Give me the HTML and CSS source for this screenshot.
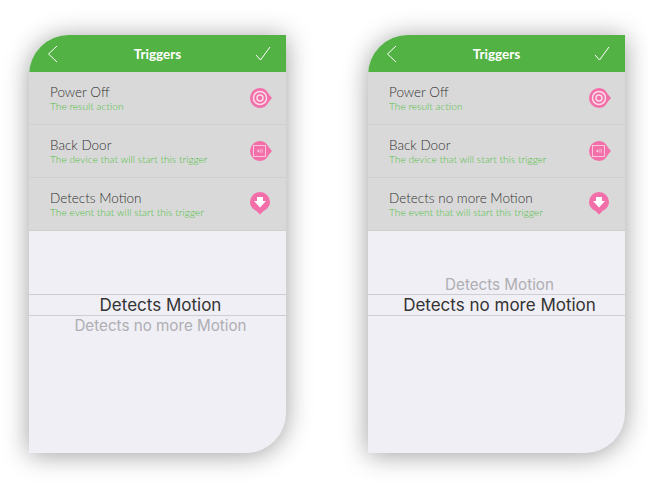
FILE: index.html
```html
<!DOCTYPE html>
<html lang="en">
<head>
    <meta charset="UTF-8">
    <title>Triggers</title>
    <link rel="stylesheet" href="styles.css">
</head>
<body>
    <svg class="defs" width="0" height="0">
        <symbol id="pin-target" viewBox="0 0 26 24">
            <path d="M12 2a10 10 0 1 0 0 20c4 0 7.200-2.800 9-6.500l3-3.500-3-3.500C19.200 4.800 16 2 12 2z" fill="#f36fa9"/>
            <circle cx="12" cy="12" r="6.500" fill="none" stroke="#fbdce9" stroke-width="1.500"/>
            <circle cx="12" cy="12" r="3" fill="none" stroke="#fbdce9" stroke-width="1.500"/>
        </symbol>
        <symbol id="pin-door" viewBox="0 0 26 24">
            <path d="M12 2a10 10 0 1 0 0 20c4 0 7.200-2.800 9-6.500l3-3.500-3-3.500C19.200 4.800 16 2 12 2z" fill="#f36fa9"/>
            <rect x="5.500" y="6.500" width="12" height="11" fill="none" stroke="#fbdce9" stroke-width=".8"/>
            <path d="M9.500 11.200h.8l1-1v3.600l-1-1h-.8z" fill="#fbdce9"/>
            <path d="M12.500 10.500c.5 1 .5 2 0 3M13.800 9.800c.8 1.400.8 3 0 4.400" fill="none" stroke="#fbdce9" stroke-width=".6"/>
        </symbol>
        <symbol id="pin-down" viewBox="0 0 24 26">
            <path d="M12 2a10 10 0 0 0-10 10c0 4 2.800 7.200 6.500 9l3.500 3.500 3.500-3.500c3.700-1.800 6.500-5 6.500-9a10 10 0 0 0-10-10z" fill="#f36fa9"/>
            <path d="M9 7h6v4h3l-6 6.500L6 11h3z" fill="#fff"/>
        </symbol>
    </svg>

    <div class="screen">
        <div class="topbar">
            <svg class="back" width="11" height="18" viewBox="0 0 11 18"><path d="M10 1 1.500 9l8.500 8" fill="none" stroke="#fff" stroke-width="1"/></svg>
            <span class="title">Triggers</span>
            <svg class="done" width="16" height="15" viewBox="0 0 16 15"><path d="M1 9l4.500 5L15 1" fill="none" stroke="#fff" stroke-width="1"/></svg>
        </div>
        <div class="row">
            <div class="labels">
                <div class="name">Power Off</div>
                <div class="hint">The result action</div>
            </div>
            <svg class="pin" width="26" height="24"><use href="#pin-target"/></svg>
        </div>
        <div class="row">
            <div class="labels">
                <div class="name">Back Door</div>
                <div class="hint">The device that will start this trigger</div>
            </div>
            <svg class="pin" width="26" height="24"><use href="#pin-door"/></svg>
        </div>
        <div class="row">
            <div class="labels">
                <div class="name">Detects Motion</div>
                <div class="hint">The event that will start this trigger</div>
            </div>
            <svg class="pin pin-tall" width="24" height="26"><use href="#pin-down"/></svg>
        </div>
        <div class="picker">
            <div class="option"></div>
            <div class="option selected">Detects Motion</div>
            <div class="option">Detects no more Motion</div>
        </div>
    </div>

    <div class="screen">
        <div class="topbar">
            <svg class="back" width="11" height="18" viewBox="0 0 11 18"><path d="M10 1 1.500 9l8.500 8" fill="none" stroke="#fff" stroke-width="1"/></svg>
            <span class="title">Triggers</span>
            <svg class="done" width="16" height="15" viewBox="0 0 16 15"><path d="M1 9l4.500 5L15 1" fill="none" stroke="#fff" stroke-width="1"/></svg>
        </div>
        <div class="row">
            <div class="labels">
                <div class="name">Power Off</div>
                <div class="hint">The result action</div>
            </div>
            <svg class="pin" width="26" height="24"><use href="#pin-target"/></svg>
        </div>
        <div class="row">
            <div class="labels">
                <div class="name">Back Door</div>
                <div class="hint">The device that will start this trigger</div>
            </div>
            <svg class="pin" width="26" height="24"><use href="#pin-door"/></svg>
        </div>
        <div class="row">
            <div class="labels">
                <div class="name">Detects no more Motion</div>
                <div class="hint">The event that will start this trigger</div>
            </div>
            <svg class="pin pin-tall" width="24" height="26"><use href="#pin-down"/></svg>
        </div>
        <div class="picker">
            <div class="option">Detects Motion</div>
            <div class="option selected">Detects no more Motion</div>
            <div class="option"></div>
        </div>
    </div>
</body>
</html>
```
FILE: styles.css
```css
html, body {
    height: 100%;
    margin: 0;
}

body {
    display: flex;
    gap: 82px;
    box-sizing: border-box;
    padding: 35px 0 0 29px;
    background: #fff;
    overflow: hidden;
    font-family: "Lato", "Liberation Sans", sans-serif;
}

.defs {
    position: absolute;
}

/* one phone screen */
.screen {
    display: flex;
    flex-direction: column;
    width: 257px;
    height: 418px;
    background: #f0eff5;
    border-radius: 40px 0 40px 0;
    box-shadow: 0 2px 26px rgba(0, 0, 0, 0.38);
    overflow: hidden;
}

.topbar {
    display: flex;
    align-items: center;
    justify-content: space-between;
    height: 37px;
    padding: 0 15px 0 18px;
    background: #53b244;
    color: #fff;
}

.title {
    padding: 1px 0 0 2px;
    font-size: 13.5px;
    font-weight: 700;
}

/* setting rows */
.row {
    display: flex;
    align-items: center;
    justify-content: space-between;
    box-sizing: border-box;
    height: 53px;
    padding: 0 12px 0 21px;
    background: #d9d9d9;
    border-bottom: 1px solid #cfcfcf;
}

.row:last-of-type {
    height: 52px;
    border-bottom: 0;
}

.name {
    font-size: 13.5px;
    font-weight: 300;
    line-height: 14px;
    color: #333;
}

.hint {
    margin-top: 1px;
    font-size: 10.2px;
    font-weight: 300;
    line-height: 12px;
    color: #55c048;
}

.pin-tall {
    margin: 0 2px 2px 0;
}

/* wheel at the bottom */
.picker {
    padding: 44px 0 0 6px;
}

.option {
    height: 19px;
    font-family: "Inter", "Liberation Sans", sans-serif;
    font-size: 15.2px;
    line-height: 19px;
    text-align: center;
    color: #aeaeb3;
}

.option.selected {
    height: 20px;
    margin: 0 0 0 -6px;
    padding-left: 6px;
    font-size: 17px;
    line-height: 20px;
    color: #333;
    border-top: 1px solid #cdcdd3;
    border-bottom: 1px solid #cdcdd3;
}
```
